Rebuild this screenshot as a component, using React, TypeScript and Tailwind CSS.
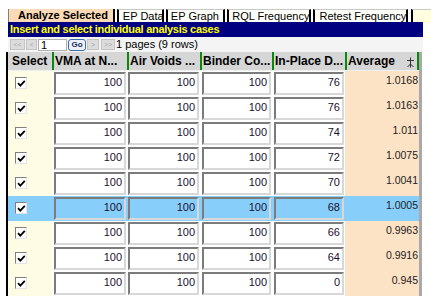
import React from "react";

const rows = [
  { v: "76", avg: "1.0168" },
  { v: "76", avg: "1.0163" },
  { v: "74", avg: "1.011" },
  { v: "72", avg: "1.0075" },
  { v: "70", avg: "1.0041" },
  { v: "68", avg: "1.0005", sel: true },
  { v: "66", avg: "0.9963" },
  { v: "64", avg: "0.9916" },
  { v: "0", avg: "0.945" },
];

function Check() {
  return (
    <div className="w-[12px] h-[12px] bg-white border-t border-l border-[#808080] border-r border-b border-r-[#e4e4e4] border-b-[#e4e4e4] flex items-center justify-center">
      <svg width="9" height="9" viewBox="0 0 9 9">
        <path d="M1 4.2 L3.3 6.6 L7.8 1.8" fill="none" stroke="#000" strokeWidth="1.8" />
      </svg>
    </div>
  );
}

function Input({ value, sel }: { value: string; sel?: boolean }) {
  return (
    <div
      className={`w-full h-[23px] mt-[1px] border-t-2 border-l-2 border-[#7b7b7b] border-r-2 border-b-2 border-r-[#d8d8d8] border-b-[#d8d8d8] flex items-center justify-end pr-[2px] pb-[3px] text-[11px] text-[#1c1030] ${
        sel ? "bg-[#87cefa]" : "bg-white"
      }`}
    >
      {value}
    </div>
  );
}

export default function App() {
  return (
    <div
      className="w-[431px] h-[304px] bg-white overflow-hidden text-black"
      style={{ fontFamily: '"Liberation Sans", Arial, sans-serif' }}
    >
      {/* Tabs */}
      <div className="flex h-[22px] pt-[9px] pl-[8px] text-[11px] leading-[13px] whitespace-nowrap">
        <div className="w-[108px] h-[13px] border-l border-[#808080] border-r-2 border-r-black bg-[#fcdab6] font-bold pl-[9px] flex items-center">
          Analyze Selected
        </div>
        <div className="w-[2px]" />
        <div className="w-[47px] h-[13px] border-x-2 border-black bg-[#fffffa] border-t border-t-[#c8c8c8] pl-[4px] flex items-center whitespace-nowrap">
          EP Data
        </div>
        <div className="w-[2px]" />
        <div className="w-[60px] h-[13px] border-x-2 border-black bg-[#fffffa] border-t border-t-[#c8c8c8] pl-[3px] flex items-center whitespace-nowrap">
          EP Graph
        </div>
        <div className="w-[2px]" />
        <div className="w-[85px] h-[13px] border-x-2 border-black bg-[#fffffa] border-t border-t-[#c8c8c8] pl-[3px] flex items-center whitespace-nowrap">
          RQL Frequency
        </div>
        <div className="w-[2px]" />
        <div className="w-[95px] h-[13px] border-x-2 border-black bg-[#fffffa] border-t border-t-[#c8c8c8] pl-[4px] flex items-center whitespace-nowrap">
          Retest Frequency
        </div>
        <div className="w-[3px]" />
        <div className="w-[20px] h-[13px] border-l-2 border-black bg-[#ffffe0] border-t border-t-[#c8c8c8]" />
      </div>

      {/* Title bar */}
      <div className="ml-[8px] w-[415px] h-[15px] bg-[#000080] text-[#ffff00] font-bold text-[11px] tracking-[-0.28px] leading-[15px] pl-[2px] whitespace-nowrap">
        Insert and select individual analysis cases
      </div>

      {/* Pager */}
      <div className="ml-[8px] w-[415px] h-[15px] bg-[#f4f4f4] flex items-center text-[11px]">
        <div className="ml-[2px] w-[15px] h-[11px] bg-[#dcdcdc] border border-[#c4c4c4] text-[7px] leading-[9px] text-[#a8a8a8] flex items-center justify-center">
          &lt;&lt;
        </div>
        <div className="ml-[1px] w-[11px] h-[11px] bg-[#dcdcdc] border border-[#c4c4c4] text-[7px] leading-[9px] text-[#a8a8a8] flex items-center justify-center">
          &lt;
        </div>
        <div className="ml-[1px] w-[29px] h-[12px] bg-white border border-[#b0b0b0] text-[11px] leading-[10px] pl-[2px]">
          1
        </div>
        <div className="ml-[1px] w-[18px] h-[12px] rounded-[3px] bg-[#eef2f8] border border-[#3c6fa8] text-[8px] font-bold text-[#1a2a60] flex items-center justify-center">
          Go
        </div>
        <div className="ml-[1px] w-[12px] h-[11px] bg-[#dcdcdc] border border-[#c4c4c4] text-[7px] leading-[9px] text-[#a8a8a8] flex items-center justify-center">
          &gt;
        </div>
        <div className="ml-[2px] w-[14px] h-[11px] bg-[#dcdcdc] border border-[#c4c4c4] text-[7px] leading-[9px] text-[#a8a8a8] flex items-center justify-center">
          &gt;&gt;
        </div>
        <div className="ml-[1px] whitespace-nowrap">1 pages (9 rows)</div>
      </div>

      {/* Grid */}
      <div className="ml-[6px] w-[416px] border-l-2 border-black border-r-[3px] border-r-[#a9a9a9]">
        {/* Header */}
        <div className="flex h-[19px] bg-[#d6d6d6] text-[12px] font-bold leading-[19px] whitespace-nowrap border-b border-[#f0f0f0]">
          <div className="w-[44px] pl-[4px]">Select</div>
          <div className="w-[75px] border-l-[2px] border-[#0a8a0a] pl-[1px] overflow-hidden">VMA at N...</div>
          <div className="w-[73px] border-l-[2px] border-[#0a8a0a] pl-[1px] overflow-hidden">Air Voids ...</div>
          <div className="w-[72px] border-l-[2px] border-[#0a8a0a] pl-[1px] overflow-hidden">Binder Co...</div>
          <div className="w-[73px] border-l-[2px] border-[#0a8a0a] pl-[1px] overflow-hidden">In-Place D...</div>
          <div className="w-[74px] border-l-[2px] border-r-[2px] border-[#0a8a0a] pl-[1px] flex items-start justify-between pr-[2px]">
            <span>Average</span>
            <svg width="9" height="11" viewBox="0 0 9 11" className="mt-[5px]">
              <path d="M4.5 0.5 V10.5 M1 3.5 H8 M1.5 10 L4.5 7 L7.5 10" fill="none" stroke="#333" strokeWidth="1" />
            </svg>
          </div>
        </div>

        {/* Rows */}
        {rows.map((r, i) => (
          <div key={i} className={`flex h-[25px] ${r.sel ? "bg-[#87cefa]" : "bg-white"}`}>
            <div className={`w-[44px] flex items-center pl-[7px] pb-[1px] ${r.sel ? "bg-[#87cefa]" : "bg-[#fffce6]"}`}>
              <Check />
            </div>
            <div className="w-[75px] pl-[2px] pr-[1px]">
              <Input value="100" sel={r.sel} />
            </div>
            <div className="w-[73px] pl-[1px] pr-[1px]">
              <Input value="100" sel={r.sel} />
            </div>
            <div className="w-[72px] pl-[2px] pr-[1px]">
              <Input value="100" sel={r.sel} />
            </div>
            <div className="w-[73px] pl-[2px] pr-[1px]">
              <Input value={r.v} sel={r.sel} />
            </div>
            <div
              className={`w-[74px] text-right pr-[1px] pt-[3px] text-[10.5px] leading-[12px] text-[#222] ${
                r.sel ? "bg-[#87cefa]" : "bg-[#fde3c6]"
              }`}
            >
              {r.avg}
            </div>
          </div>
        ))}
      </div>
    </div>
  );
}
